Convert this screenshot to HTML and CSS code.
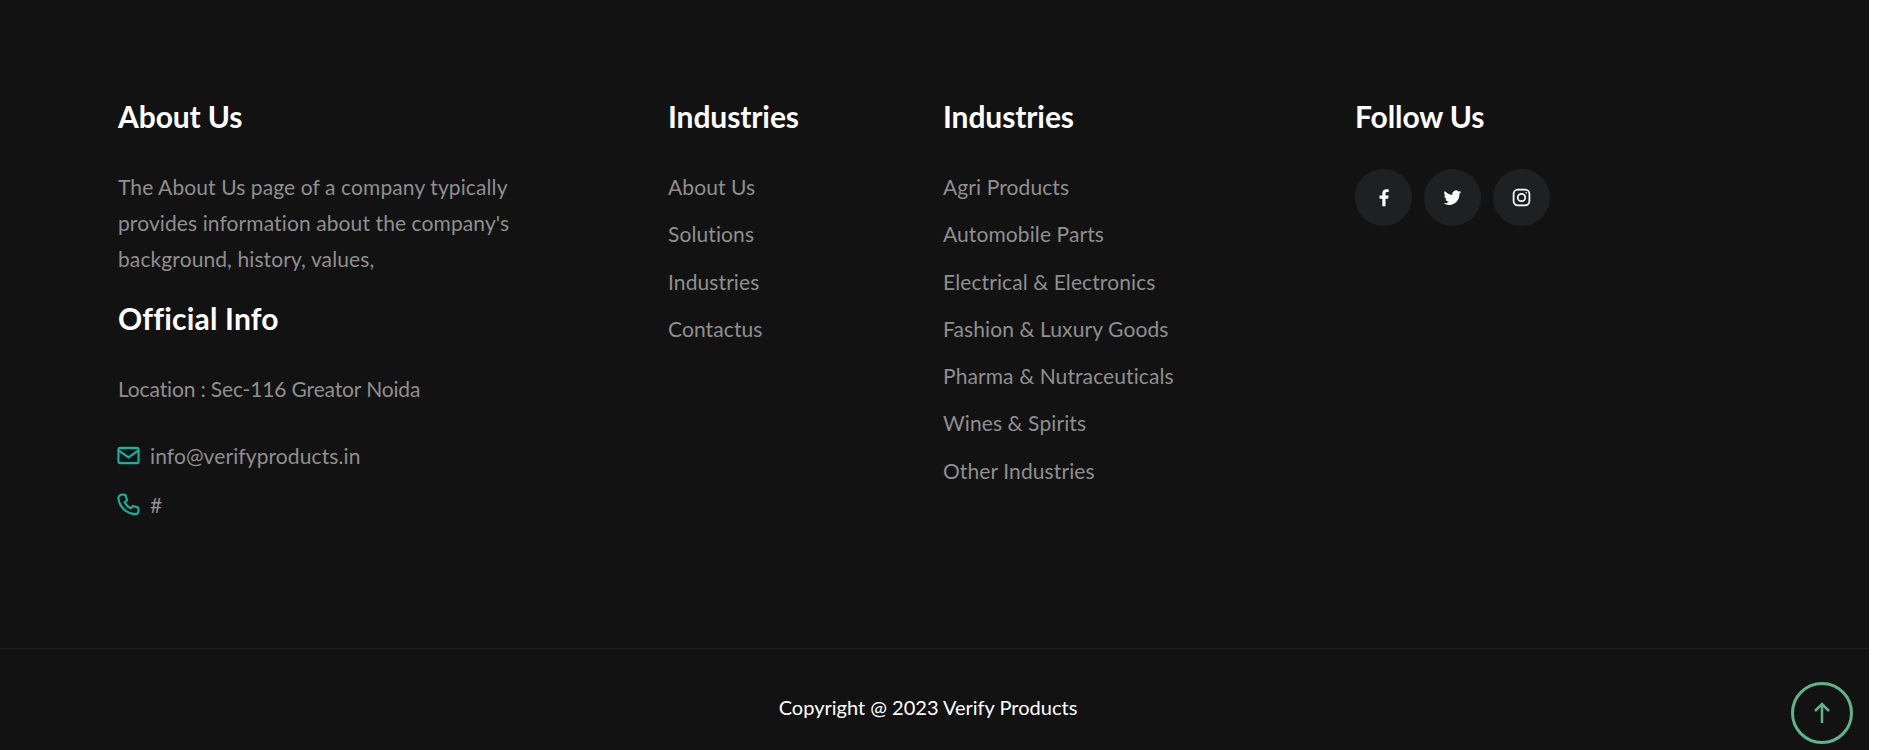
FILE: index.html
```html
<!DOCTYPE html>
<html lang="en">
<head>
    <meta charset="UTF-8">
    <title>Verify Products</title>
    <meta name="viewport" content="width=device-width">
    <link rel="stylesheet" href="styles.css">
</head>
<body>
    <footer class="footer">
        <div class="footer-top">
            <div class="footer-col">
                <h3>About Us</h3>
                <p class="about-text">The About Us page of a company typically provides information about the company's background, history, values,</p>
                <h3 class="official">Official Info</h3>
                <p class="location">Location : Sec-116 Greator Noida</p>
                <div class="contact-row mail">
                    <svg class="contact-icon" viewBox="0 0 24 24" fill="none" stroke="currentColor" stroke-width="2.200"><rect x="1.500" y="4" width="21" height="16" rx="2"/><path d="M2 7l10 7 10-7"/></svg>
                    <span>info@verifyproducts.in</span>
                </div>
                <div class="contact-row">
                    <svg class="contact-icon" viewBox="0 0 24 24" fill="none" stroke="currentColor" stroke-width="2.200" stroke-linejoin="round"><path d="M5.500 1.500 8.800 2l1.700 5.500-2.500 2.200a14 14 0 0 0 6.300 6.300l2.200-2.500 5.500 1.700.5 3.300c0 2-1.600 3.600-3.600 3.500C9.500 21.500 2 14 1.500 5.100 1.400 3.100 3.500 1.500 5.500 1.500z"/></svg>
                    <span>#</span>
                </div>
            </div>
            <div class="footer-col">
                <h3>Industries</h3>
                <ul class="link-list">
                    <li>About Us</li>
                    <li>Solutions</li>
                    <li>Industries</li>
                    <li>Contactus</li>
                </ul>
            </div>
            <div class="footer-col">
                <h3>Industries</h3>
                <ul class="link-list">
                    <li>Agri Products</li>
                    <li>Automobile Parts</li>
                    <li>Electrical &amp; Electronics</li>
                    <li>Fashion &amp; Luxury Goods</li>
                    <li>Pharma &amp; Nutraceuticals</li>
                    <li>Wines &amp; Spirits</li>
                    <li>Other Industries</li>
                </ul>
            </div>
            <div class="footer-col">
                <h3>Follow Us</h3>
                <div class="socials">
                    <a class="social" href="#">
                        <svg viewBox="0 0 24 24" fill="currentColor"><path d="M14.500 23v-9.500h3.300l.6-4h-3.900V7.200c0-1.100.5-2 2-2h2V1.700C18 1.600 17 1.500 15.800 1.500c-3 0-5.300 1.800-5.300 5.300v2.700H7v4h3.500V23z"/></svg>
                    </a>
                    <a class="social" href="#">
                        <svg viewBox="0 0 24 24" fill="currentColor"><path d="M23 5.200c-.8.400-1.700.6-2.600.7.900-.6 1.700-1.500 2-2.500-.9.500-1.900.9-2.900 1.100A4.600 4.600 0 0 0 11.700 8.700 13 13 0 0 1 2.300 3.900a4.600 4.600 0 0 0 1.400 6.100c-.8 0-1.500-.2-2.100-.6 0 2.200 1.600 4.100 3.700 4.600-.7.200-1.400.2-2.100.1.600 1.800 2.300 3.100 4.300 3.200A9.200 9.200 0 0 1 .7 19.200 13 13 0 0 0 20.700 7.600c.9-.6 1.700-1.400 2.300-2.400z"/></svg>
                    </a>
                    <a class="social" href="#">
                        <svg viewBox="0 0 24 24" fill="none" stroke="currentColor" stroke-width="2.200"><rect x="2" y="2" width="20" height="20" rx="5.500"/><circle cx="12" cy="12" r="4.700"/><circle cx="18" cy="6" r=".6" fill="currentColor" stroke-width="1"/></svg>
                    </a>
                </div>
            </div>
        </div>
        <div class="footer-bottom">
            <p>Copyright @ 2023 Verify Products</p>
        </div>
    </footer>
    <a class="scroll-top" href="#">
        <svg viewBox="0 0 24 24" fill="none" stroke="currentColor" stroke-width="2.500"><path d="M12 22V3M5 10l7-7 7 7"/></svg>
    </a>
</body>
</html>
```

FILE: styles.css
```css
*,
*::after,
*:before{
    padding: 0;
    margin: 0;
    box-sizing: border-box;
}
html{
    font:normal 21px/1.5 "Lato", "Open Sans", sans-serif;
    letter-spacing: 0.1px;
}
body{
    background-color: #fff;
    color: #8f8f8f;
    height: 750px;
    overflow: hidden;
}
.footer{
    width: 1869px;
    height: 750px;
    background-color: #121212;
}
.footer-top{
    display: grid;
    grid-template-columns: 550px 275px 412px 1fr;
    padding: 95px 0 0 118px;
    height: 648px;
}
h3{
    font-size: 30px;
    line-height: 42px;
    font-weight: 700;
    color: #fff;
    margin-bottom: 32px;
    letter-spacing: -0.1px;
}
.about-text{
    width: 420px;
    line-height: 36px;
}
.official{
    margin-top: 19.600px;
    letter-spacing: 0.2px;
}
.location{
    line-height: 36px;
    margin-bottom: 31px;
    letter-spacing: -0.15px;
}
.contact-row{
    display: flex;
    align-items: center;
    gap: 10px;
    height: 36px;
    margin-bottom: 13px;
}
.contact-icon{
    width: 23px;
    height: 23px;
    color: #13b5a2;
    margin-left: -1px;
}
.link-list{
    list-style: none;
}
.link-list li{
    line-height: 36px;
    margin-bottom: 11.300px;
}
.socials{
    display: flex;
    gap: 12px;
}
.social{
    width: 57px;
    height: 57px;
    border-radius: 50%;
    background-color: #1e2022;
    color: #fff;
    display: flex;
    align-items: center;
    justify-content: center;
}
.social svg{
    width: 19px;
    height: 19px;
}
.footer-bottom{
    border-top: 1px solid #212121;
    padding: 43px 13px 0 0;
    text-align: center;
    color: #fff;
    font-size: 20px;
    letter-spacing: 0;
}
.scroll-top{
    position: fixed;
    left: 1791px;
    top: 682px;
    width: 62px;
    height: 62px;
    border: 3px solid #5fb48c;
    border-radius: 50%;
    color: #5fb48c;
    display: flex;
    align-items: center;
    justify-content: center;
}
.scroll-top svg{
    width: 24px;
    height: 24px;
}
```
